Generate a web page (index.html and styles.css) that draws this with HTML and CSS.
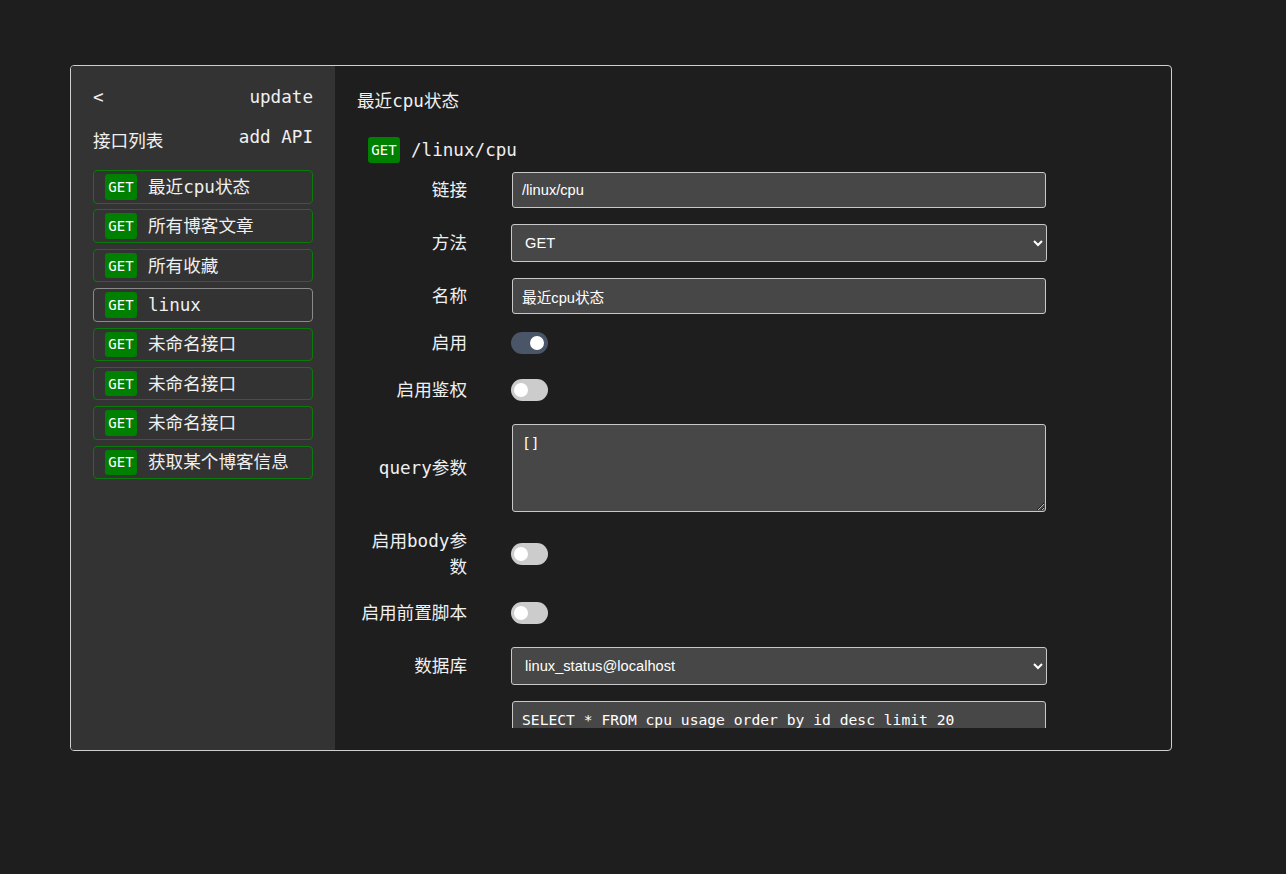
FILE: index.html
```html
<!DOCTYPE html>
<html lang="zh">
<head>
<meta charset="utf-8">
<title>API</title>
<link rel="stylesheet" href="styles.css">
</head>
<body>
<div class="app">
  <aside class="sidebar">
    <div class="side-head">
      <button class="plain">&lt;</button>
      <button class="plain">update</button>
    </div>
    <div class="side-head side-head2">
      <span class="list-title">接口列表</span>
      <button class="plain add">add API</button>
    </div>
    <ul class="api-list">
      <li class="api-item"><span class="badge">GET</span><span>最近cpu状态</span></li>
      <li class="api-item"><span class="badge">GET</span><span>所有博客文章</span></li>
      <li class="api-item"><span class="badge">GET</span><span>所有收藏</span></li>
      <li class="api-item active"><span class="badge">GET</span><span>linux</span></li>
      <li class="api-item"><span class="badge">GET</span><span>未命名接口</span></li>
      <li class="api-item"><span class="badge">GET</span><span>未命名接口</span></li>
      <li class="api-item"><span class="badge">GET</span><span>未命名接口</span></li>
      <li class="api-item"><span class="badge">GET</span><span>获取某个博客信息</span></li>
    </ul>
  </aside>
  <main class="main">
    <div class="scroll">
      <h1 class="title">最近cpu状态</h1>
      <div class="endpoint"><span class="badge badge-lg">GET</span><span class="path">/linux/cpu</span></div>
      <div class="form">
        <div class="row">
          <label class="lbl">链接</label>
          <input class="field" type="text" value="/linux/cpu">
        </div>
        <div class="row">
          <label class="lbl">方法</label>
          <select class="field sel"><option>GET</option><option>POST</option></select>
        </div>
        <div class="row">
          <label class="lbl">名称</label>
          <input class="field" type="text" value="最近cpu状态">
        </div>
        <div class="row row-toggle">
          <label class="lbl">启用</label>
          <span class="switch on"><span class="knob"></span></span>
        </div>
        <div class="row row-toggle">
          <label class="lbl">启用鉴权</label>
          <span class="switch"><span class="knob"></span></span>
        </div>
        <div class="row">
          <label class="lbl">query参数</label>
          <textarea class="field area">[]</textarea>
        </div>
        <div class="row row-body">
          <label class="lbl">启用body参数</label>
          <span class="switch"><span class="knob"></span></span>
        </div>
        <div class="row row-toggle">
          <label class="lbl">启用前置脚本</label>
          <span class="switch"><span class="knob"></span></span>
        </div>
        <div class="row">
          <label class="lbl">数据库</label>
          <select class="field sel"><option>linux_status@localhost</option></select>
        </div>
        <div class="row">
          <label class="lbl"></label>
          <textarea class="field area sql">SELECT * FROM cpu_usage order by id desc limit 20</textarea>
        </div>
      </div>
    </div>
  </main>
</div>
</body>
</html>
```
FILE: styles.css
```css
* { box-sizing: border-box; }
html, body { margin: 0; padding: 0; }
body {
  background: #1e1e1e;
  color: #f0f0f0;
  font-family: "DejaVu Sans Mono", "Noto Sans CJK SC", monospace;
  font-size: 17.6px;
  padding: 65px 0 0 70px;
  height: 874px;
  overflow: hidden;
}
.app {
  width: 1102px;
  height: 686px;
  border: 1px solid #cfcfcf;
  border-radius: 4px;
  display: flex;
  overflow: hidden;
}
.sidebar {
  width: 264px;
  flex: none;
  background: #333333;
  padding: 20px 22px 0 22px;
}
.side-head {
  display: flex;
  justify-content: space-between;
  align-items: center;
  height: 22px;
}
.side-head2 {
  margin-top: 20px;
  align-items: flex-start;
  height: 42px;
}
.list-title { line-height: 26px; }
.plain {
  background: none;
  border: 0;
  padding: 0;
  color: #f0f0f0;
  font: inherit;
  line-height: 22px;
  cursor: pointer;
}
.add { margin-top: -2px; }
.api-list {
  list-style: none;
  margin: 0;
  padding: 0;
}
.api-item {
  display: flex;
  align-items: center;
  gap: 11px;
  height: 33.5px;
  padding: 0 11px;
  margin-bottom: 5.9px;
  border: 1px solid #0a7a0a;
  border-radius: 4px;
  line-height: 26px;
}
.api-item.active { border-color: #8a8a8a; }
.badge {
  display: inline-flex;
  align-items: center;
  justify-content: center;
  width: 32px;
  height: 25.5px;
  background: #008000;
  color: #fff;
  border-radius: 3px;
  font-size: 14px;
  font-family: "DejaVu Sans Mono", monospace;
}
.badge-lg { height: 26px; }
.main {
  flex: 1;
  min-width: 0;
  padding: 22px 22px 22px 22px;
  display: flex;
  flex-direction: column;
}
.scroll {
  flex: 1;
  min-height: 0;
  overflow: hidden;
}
.title {
  margin: 0;
  font-size: 17.6px;
  font-weight: normal;
  line-height: 26px;
}
.endpoint {
  display: flex;
  align-items: center;
  gap: 11px;
  margin: 23px 0 0 11px;
  height: 26px;
}
.form {
  display: flex;
  flex-direction: column;
  gap: 16px;
  margin-top: 9px;
}
.row {
  display: flex;
  align-items: center;
}
.row-toggle { height: 31px; padding-bottom: 5px; }
.row-body { padding-bottom: 4px; }
.lbl {
  width: 110px;
  flex: none;
  text-align: right;
  margin-right: 45px;
  line-height: 26px;
}
.field {
  width: 534px;
  height: 36px;
  background: #474747;
  color: #fff;
  border: 1px solid #c8c8c8;
  border-radius: 3px;
  font-family: "Liberation Sans", "Noto Sans CJK SC", sans-serif;
  font-size: 14.67px;
  padding: 0 9px;
  outline: none;
}
.sel {
  width: 536px;
  height: 38px;
  margin-left: -1px;
  padding: 0 9px;
  color-scheme: dark;
}
.area {
  height: 88px;
  padding: 9px 9px;
  font-family: "DejaVu Sans Mono", monospace;
  font-size: 14.67px;
  resize: vertical;
  color-scheme: dark;
}
.sql { height: 120px; padding-top: 9px; }
.switch {
  position: relative;
  display: inline-block;
  width: 37px;
  height: 22px;
  margin-left: -1px;
  border-radius: 11px;
  background: #cccccc;
}
.switch.on { background: #4a5568; }
.knob {
  position: absolute;
  top: 4px;
  left: 3px;
  width: 14px;
  height: 14px;
  border-radius: 50%;
  background: #fff;
}
.switch.on .knob { left: 19px; }
```
